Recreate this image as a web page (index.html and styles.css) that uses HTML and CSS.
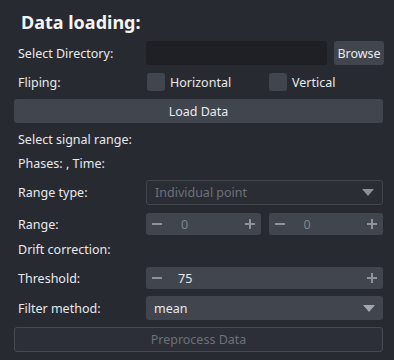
FILE: index.html
```html
<!DOCTYPE html>
<html lang="en">
<head>
    <meta charset="UTF-8">
    <title>Data loading</title>
    <link rel="stylesheet" href="styles.css">
</head>
<body>

<div class="panel">
    <h1 class="title">Data loading:</h1>

    <div class="form-row row-dir">
        <label>Select Directory:</label>
        <div class="dir-field">
            <input type="text" class="dir-input">
            <button class="btn browse">Browse</button>
        </div>
    </div>

    <div class="form-row row-flip">
        <label>Fliping:</label>
        <div class="checks">
            <span class="check"><span class="box"></span>Horizontal</span>
            <span class="check"><span class="box"></span>Vertical</span>
        </div>
    </div>

    <button class="btn wide load">Load Data</button>

    <div class="text-row row-signal">Select signal range:</div>
    <div class="text-row row-phases">Phases: , Time:</div>

    <div class="form-row row-type">
        <label>Range type:</label>
        <div class="combo disabled">
            <span>Individual point</span>
            <span class="arrow"></span>
        </div>
    </div>

    <div class="form-row row-range">
        <label>Range:</label>
        <div class="pair">
            <div class="spin dim"><span class="minus"></span><span class="val">0</span><span class="plus"></span></div>
            <div class="spin dim"><span class="minus"></span><span class="val">0</span><span class="plus"></span></div>
        </div>
    </div>

    <div class="text-row row-drift">Drift correction:</div>

    <div class="form-row row-thresh">
        <label>Threshold:</label>
        <div class="spin"><span class="minus"></span><span class="val">75</span><span class="plus"></span></div>
    </div>

    <div class="form-row row-filter">
        <label>Filter method:</label>
        <div class="combo">
            <span>mean</span>
            <span class="arrow"></span>
        </div>
    </div>

    <button class="btn wide preprocess">Preprocess Data</button>
</div>

</body>
</html>
```

FILE: styles.css
```css
body {
    margin: 0;
    padding: 0;
    background-color: #272a31;
    font-family: "Noto Sans", sans-serif;
    font-size: 12.5px;
    color: #e8e9eb;
}
.panel {
    width: 394px;
    height: 360px;
    padding: 10px 11px 0 14px;
    box-sizing: border-box;
    display: flex;
    flex-direction: column;
}
.title {
    margin: 0 0 0 7px;
    height: 24px;
    line-height: 24px;
    font-size: 18px;
    font-weight: bold;
    color: #f4f4f5;
}
.form-row {
    display: grid;
    grid-template-columns: 132px 1fr;
    align-items: center;
}
.form-row label,
.text-row {
    padding-left: 4px;
}
.text-row {
    height: 20px;
    line-height: 20px;
}
.row-dir { margin-top: 7px; height: 24px; }
.row-flip { margin-top: 8px; height: 18px; }
.load { margin-top: 8px; }
.row-signal { margin-top: 7px; }
.row-phases { margin-top: 4px; }
.row-type { margin-top: 6px; height: 25px; }
.row-range { margin-top: 8px; height: 22px; }
.row-drift { margin-top: 5px; }
.row-thresh { margin-top: 7px; height: 22px; }
.row-filter { margin-top: 7px; height: 24px; }
.preprocess { margin-top: 7px; }

.dir-field {
    display: flex;
    gap: 7px;
    height: 24px;
}
.dir-input {
    flex: 1;
    min-width: 0;
    border: none;
    border-radius: 3px;
    background-color: #1e2025;
}
.btn {
    border: none;
    border-radius: 3px;
    background-color: #41454e;
    color: #e8e9eb;
    font-family: inherit;
    font-size: inherit;
    padding: 0;
}
.browse {
    width: 50px;
}
.wide {
    height: 24px;
    width: 100%;
}
.preprocess {
    height: 25px;
    background-color: #2c2f37;
    border: 1px solid #454950;
    color: #6d7178;
}

.checks {
    display: flex;
}
.check {
    display: flex;
    align-items: center;
    width: 122px;
    padding-left: 1px;
}
.check + .check {
    margin-left: -1px;
}
.box {
    width: 18px;
    height: 18px;
    border-radius: 3px;
    background-color: #41454e;
    margin-right: 5px;
}

.combo {
    height: 100%;
    box-sizing: border-box;
    border-radius: 3px;
    background-color: #41454e;
    display: flex;
    align-items: center;
    justify-content: space-between;
    padding: 0 8px 0 8px;
}
.combo.disabled {
    background-color: #2a2d34;
    border: 1px solid #41454c;
    color: #6d7178;
}
.arrow {
    width: 0;
    height: 0;
    border-left: 6px solid transparent;
    border-right: 6px solid transparent;
    border-top: 7px solid #a3a6ab;
}
.disabled .arrow {
    border-top-color: #8d9095;
}

.pair {
    display: flex;
    gap: 8px;
    height: 100%;
}
.spin {
    flex: 1;
    height: 100%;
    border-radius: 3px;
    background-color: #41454e;
    display: flex;
    align-items: center;
    padding: 0 6px;
}
.spin .val {
    margin-left: 16px;
    flex: 1;
}
.spin.dim .val {
    color: #80848b;
    margin-left: 19px;
}
.minus,
.plus {
    width: 10px;
    height: 10px;
    position: relative;
}
.minus::before,
.plus::before,
.plus::after {
    content: "";
    position: absolute;
    background-color: #8f9399;
}
.minus::before,
.plus::before {
    left: 0;
    top: 4px;
    width: 10px;
    height: 2px;
}
.plus::after {
    left: 4px;
    top: 0;
    width: 2px;
    height: 10px;
}
```
